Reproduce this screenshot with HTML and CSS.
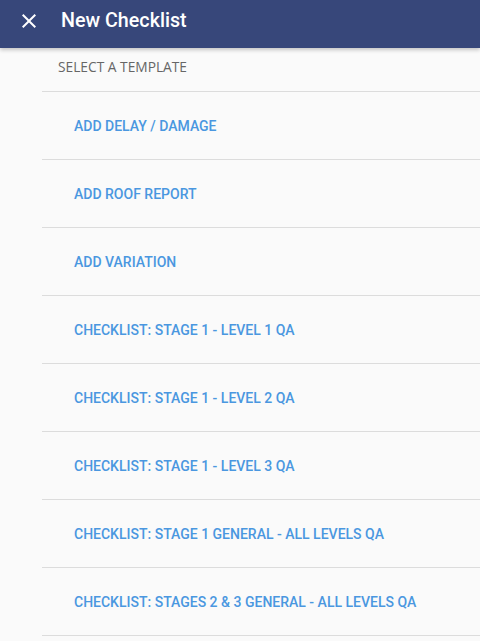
FILE: index.html
```html
<!DOCTYPE html>
<html>
<head>
<meta charset="utf-8">
<link rel="stylesheet" href="styles.css">
</head>
<body>
<header class="appbar">
  <svg class="close" width="24" height="24" viewBox="0 0 24 24"><path d="M19 6.41L17.59 5 12 10.59 6.41 5 5 6.41 10.59 12 5 17.59 6.41 19 12 13.41 17.59 19 19 17.59 13.41 12z" fill="#fff"/></svg>
  <h1 class="title">New Checklist</h1>
</header>
<main class="content">
  <div class="subheader">SELECT A TEMPLATE</div>
  <ul class="list">
    <li class="item">ADD DELAY / DAMAGE</li>
    <li class="item">ADD ROOF REPORT</li>
    <li class="item">ADD VARIATION</li>
    <li class="item">CHECKLIST: STAGE 1 - LEVEL 1 QA</li>
    <li class="item">CHECKLIST: STAGE 1 - LEVEL 2 QA</li>
    <li class="item">CHECKLIST: STAGE 1 - LEVEL 3 QA</li>
    <li class="item">CHECKLIST: STAGE 1 GENERAL - ALL LEVELS QA</li>
    <li class="item">CHECKLIST: STAGES 2 &amp; 3 GENERAL - ALL LEVELS QA</li>
  </ul>
</main>
</body>
</html>
```
FILE: styles.css
```css
html, body {
  margin: 0;
  padding: 0;
  background: #fafafa;
  overflow: hidden;
}
body {
  font-family: Roboto, "Liberation Sans", sans-serif;
}
.appbar {
  height: 48px;
  box-sizing: border-box;
  padding: 0 0 7px 17px;
  background: #37477a;
  display: flex;
  align-items: center;
  box-shadow: 0 2px 4px rgba(0,0,0,0.22);
  position: relative;
  z-index: 1;
}
.close {
  display: block;
}
.title {
  margin: 0 0 0 20px;
  color: #fff;
  font-size: 19.7px;
  font-weight: 500;
}
.content {
  padding-left: 42px;
}
.subheader {
  height: 43px;
  box-sizing: border-box;
  padding: 0 0 6px 16px;
  display: flex;
  align-items: center;
  font-family: "Open Sans", sans-serif;
  font-size: 13.75px;
  color: #666;
}
.list {
  list-style: none;
  margin: 0;
  padding: 0;
  border-top: 1px solid #dcdcdc;
}
.item {
  height: 67px;
  border-bottom: 1px solid #dcdcdc;
  display: flex;
  align-items: center;
  padding-left: 32px;
  font-size: 14px;
  font-weight: 500;
  color: #4a97e0;
}
```
